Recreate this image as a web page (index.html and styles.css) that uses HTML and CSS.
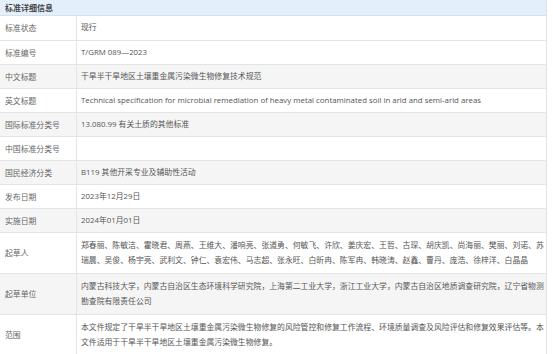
FILE: index.html
```html
<!DOCTYPE html>
<html lang="zh-CN">
<head>
    <meta charset="utf-8">
    <title>标准详细信息</title>
    <link rel="stylesheet" href="styles.css">
</head>
<body>
    <div class="panel">
        <div class="panel-title">标准详细信息</div>
        <table class="detail">
            <tr><th>标准状态</th><td>现行</td></tr>
            <tr><th>标准编号</th><td>T/GRM 089—2023</td></tr>
            <tr><th>中文标题</th><td>干旱半干旱地区土壤重金属污染微生物修复技术规范</td></tr>
            <tr><th>英文标题</th><td>Technical specification for microbial remediation of heavy metal contaminated soil in arid and semi-arid areas</td></tr>
            <tr><th>国际标准分类号</th><td>13.080.99 有关土质的其他标准</td></tr>
            <tr><th>中国标准分类号</th><td></td></tr>
            <tr><th>国民经济分类</th><td>B119 其他开采专业及辅助性活动</td></tr>
            <tr><th>发布日期</th><td>2023年12月29日</td></tr>
            <tr><th>实施日期</th><td>2024年01月01日</td></tr>
            <tr class="multi"><th>起草人</th><td>郑春丽、陈敏洁、霍晓君、周燕、王维大、潘响亮、张道勇、何敏飞、许欣、姜庆宏、王哲、古琛、胡庆凯、尚海丽、樊丽、刘诺、苏瑞晨、吴俊、杨宇亮、武利文、钟仁、袁宏伟、马志超、张永旺、白昕冉、陈军冉、韩晓涛、赵鑫、曹丹、庞浩、徐梓洋、白晶晶</td></tr>
            <tr class="multi"><th>起草单位</th><td>内蒙古科技大学，内蒙古自治区生态环境科学研究院，上海第二工业大学，浙江工业大学，内蒙古自治区地质调查研究院，辽宁省物测勘查院有限责任公司</td></tr>
            <tr class="multi"><th>范围</th><td>本文件规定了干旱半干旱地区土壤重金属污染微生物修复的风险管控和修复工作流程、环境质量调查及风险评估和修复效果评估等。本文件适用于干旱半干旱地区土壤重金属污染微生物修复。</td></tr>
        </table>
    </div>
</body>
</html>
```

FILE: styles.css
```css
body {
    margin: 0;
    background-color: #ffffff;
    font-family: "Open Sans", "Noto Sans CJK SC", sans-serif;
    font-size: 7.85px;
    color: #555555;
}

.panel {
    width: 546px;
    border-right: 1px solid #e2e2e2;
}

.panel-title {
    height: 16px;
    line-height: 16px;
    padding-left: 5px;
    background-color: #e3f0fc;
    border-bottom: 1px solid #d8e0e8;
    box-sizing: border-box;
    font-weight: bold;
    font-size: 8px;
    color: #444444;
}

.detail {
    width: 100%;
    border-collapse: collapse;
}

.detail tr {
    height: 24px;
    border-bottom: 1px solid #e4e4e4;
}

.detail tr:nth-child(2n+3) {
    background-color: #f5f5f5;
}

.detail th {
    width: 71px;
    padding: 0 0 0 5px;
    text-align: left;
    font-weight: normal;
    color: #666666;
    border-right: 1px solid #e4e4e4;
}

.detail td {
    padding: 0 0 0 4px;
    line-height: 15px;
}

.detail .multi td {
    padding-top: 5px;
    padding-bottom: 5px;
}
```
